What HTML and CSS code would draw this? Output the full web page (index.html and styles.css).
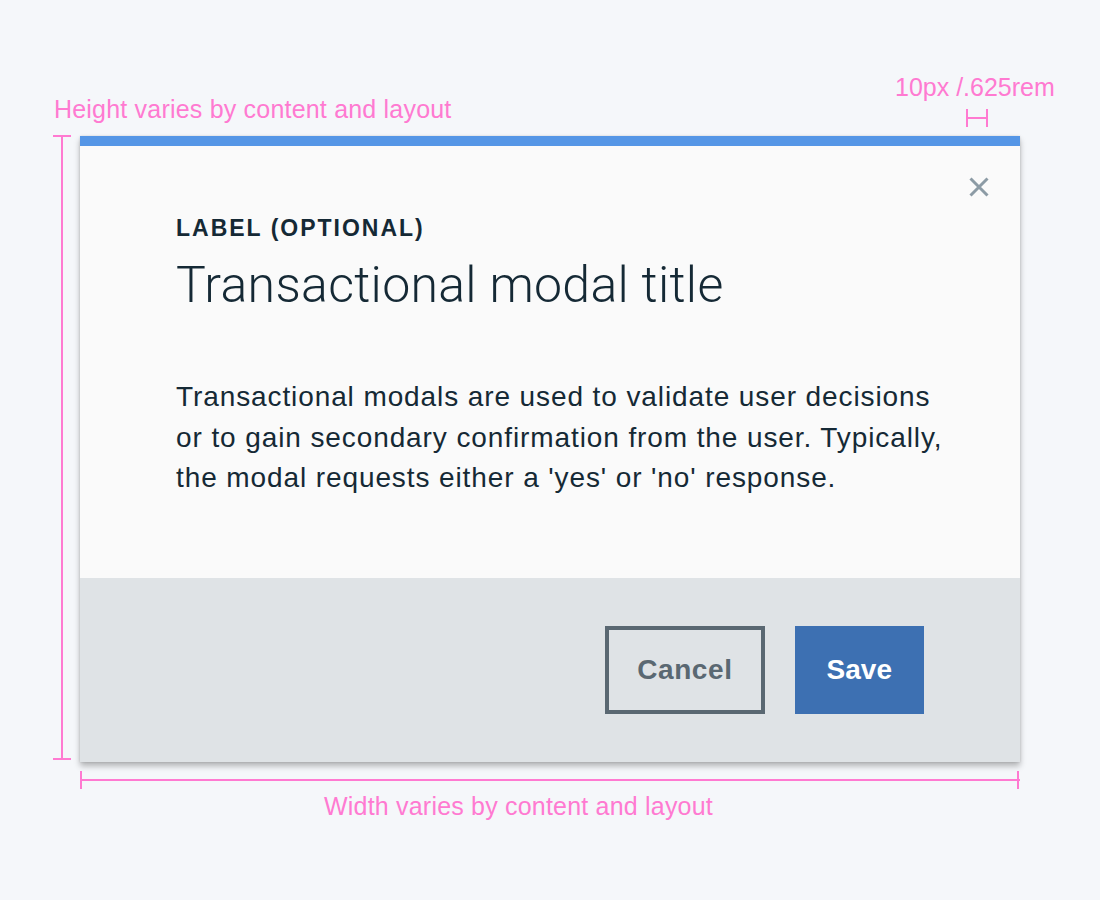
FILE: index.html
```html
<!DOCTYPE html>
<html>
<head>
<meta charset="utf-8">
<link rel="stylesheet" href="styles.css">
</head>
<body>
<div class="frame">
  <div class="note note-height">Height varies by content and layout</div>
  <div class="note note-gap">10px /.625rem</div>
  <div class="note note-width">Width varies by content and layout</div>
  <div class="dim dim-v"><span class="cap cap-top"></span><span class="cap cap-bottom"></span></div>
  <div class="dim dim-h"><span class="cap cap-left"></span><span class="cap cap-right"></span></div>
  <div class="dim dim-gap"><span class="cap cap-left"></span><span class="cap cap-right"></span></div>

  <div class="modal">
    <button class="close" aria-label="Close">
      <svg width="20" height="20" viewBox="0 0 20 20"><path d="M1.5 1.5 L18.5 18.5 M18.5 1.5 L1.5 18.5" stroke="#8c9ba5" stroke-width="3" fill="none"/></svg>
    </button>
    <div class="modal-body">
      <div class="label">LABEL (OPTIONAL)</div>
      <h1 class="title">Transactional modal title</h1>
      <p class="text">Transactional modals are used to validate user decisions<br>or to gain secondary confirmation from the user. Typically,<br>the modal requests either a 'yes' or 'no' response.</p>
    </div>
    <div class="modal-footer">
      <button class="btn btn-secondary">Cancel</button>
      <button class="btn btn-primary">Save</button>
    </div>
  </div>
</div>
</body>
</html>
```

FILE: styles.css
```css
html, body {
  margin: 0;
  padding: 0;
}
body {
  background: #f5f7fa;
  font-family: "Liberation Sans", Arial, sans-serif;
  width: 1100px;
  height: 900px;
  overflow: hidden;
}
.frame {
  position: relative;
  width: 940px;
  margin: 136px 0 0 80px;
}
.note {
  position: absolute;
  color: #ff7ad1;
  font-size: 25px;
  line-height: 30px;
  letter-spacing: 0.2px;
  white-space: nowrap;
}
.note-height { left: -26px; top: -42px; }
.note-gap { left: 815px; top: -64px; letter-spacing: 0; }
.note-width { left: 244px; top: 655px; }

.dim { position: absolute; background: #ff7ad1; }
.cap { position: absolute; background: #ff7ad1; }
.dim-v { left: -19px; top: -1px; width: 2px; height: 625px; }
.dim-v .cap { left: -8px; width: 18px; height: 2px; }
.dim-v .cap-top { top: 0; }
.dim-v .cap-bottom { bottom: 0; }
.dim-h { left: 0; top: 643px; width: 940px; height: 2px; }
.dim-h .cap { top: -8px; width: 2px; height: 18px; }
.dim-h .cap-left { left: 0; }
.dim-h .cap-right { right: 1px; }
.dim-gap { left: 886px; top: -19px; width: 22px; height: 2px; }
.dim-gap .cap { top: -8px; width: 2px; height: 18px; }
.dim-gap .cap-left { left: 0; }
.dim-gap .cap-right { right: 0; }

.modal {
  position: relative;
  background: #fafafa;
  border-top: 10px solid #5596e6;
  box-shadow: 0 4px 6px rgba(0, 0, 0, 0.28), 0 0 2px rgba(0, 0, 0, 0.12);
}
.close {
  position: absolute;
  top: 31px;
  right: 31px;
  width: 20px;
  height: 20px;
  padding: 0;
  border: 0;
  background: none;
  display: block;
}
.close svg { display: block; }
.modal-body {
  padding: 68px 96px 79.5px;
  color: #152935;
}
.label {
  font-size: 23px;
  line-height: 28px;
  font-weight: 700;
  letter-spacing: 2px;
}
.title {
  margin: 13px 0 0;
  font-family: Roboto, "Liberation Sans", sans-serif;
  font-weight: 300;
  font-size: 50px;
  line-height: 60px;
  letter-spacing: 0.3px;
}
.text {
  margin: 62px 0 0;
  font-size: 28px;
  line-height: 40.5px;
  letter-spacing: 0.9px;
  white-space: nowrap;
}
.modal-footer {
  background: #dfe3e6;
  display: flex;
  justify-content: flex-end;
  gap: 30px;
  padding: 48px 96px;
}
.btn {
  height: 88px;
  box-sizing: border-box;
  font-family: "Liberation Sans", Arial, sans-serif;
  font-size: 28px;
  font-weight: 700;
  border: 0;
  margin: 0;
}
.btn-secondary {
  background: transparent;
  border: 4px solid #5a6872;
  color: #5a6872;
  padding: 0 28px;
  letter-spacing: 0.6px;
}
.btn-primary {
  background: #3d70b2;
  color: #ffffff;
  padding: 0 32px;
}
```
